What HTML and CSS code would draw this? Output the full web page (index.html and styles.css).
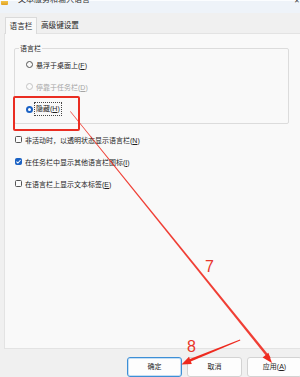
FILE: index.html
```html
<!DOCTYPE html>
<html lang="zh-CN">
<head>
<meta charset="utf-8">
<title>文本服务和输入语言</title>
<link rel="stylesheet" href="styles.css">
</head>
<body>
<div class="window">
  <div class="titlebar">
    <span class="app-icon"></span>
    <span class="title">文本服务和输入语言</span>
    <span class="close">✕</span>
  </div>
  <div class="tabs">
    <div class="tab active">语言栏</div>
    <div class="tab">高级键设置</div>
  </div>
  <div class="panel">
    <div class="group">
      <div class="legend"><span>语言栏</span></div>
      <div class="opt row1"><span class="radio"></span><span>悬浮于桌面上(<u>F</u>)</span></div>
      <div class="opt row2 disabled"><span class="radio"></span><span>停靠于任务栏(<u>D</u>)</span></div>
      <div class="opt row3"><span class="radio on"></span><span class="focus">隐藏(<u>H</u>)</span></div>
    </div>
    <div class="checks">
      <div class="chk"><span class="box"></span><span>非活动时，以透明状态显示语言栏(<u>N</u>)</span></div>
      <div class="chk"><span class="box on"><svg viewBox="0 0 8 8" width="7" height="7"><path d="M1.6 4.1 L3.3 5.7 L6.4 2.3" fill="none" stroke="#fff" stroke-width="1.2"/></svg></span><span>在任务栏中显示其他语言栏图标(<u>I</u>)</span></div>
      <div class="chk"><span class="box"></span><span>在语言栏上显示文本标签(<u>E</u>)</span></div>
    </div>
  </div>
  <div class="footer">
    <div class="btn primary">确定</div>
    <div class="btn">取消</div>
    <div class="btn">应用(<u>A</u>)</div>
  </div>
</div>

<div class="hl-box"></div>
<svg class="arrows" width="300" height="377" viewBox="0 0 300 377">
  <polygon points="70,111.5 70.6,111.2 270.6,357.4 268.6,358.9" fill="#ee2a1f" opacity="0.9"/>
  <polygon points="272,363 262.6,357.6 268.4,352.8" fill="#ee2a1f"/>
  <polygon points="240,339.6 240.3,340.4 189.6,362 188.6,359.4" fill="#ee2a1f"/>
  <polygon points="181.5,364.5 191.8,364 189,356.8" fill="#ee2a1f"/>
</svg>
<span class="num n7">7</span>
<span class="num n8">8</span>
</body>
</html>
```
FILE: styles.css
```css
* { box-sizing: border-box; }
html, body { margin: 0; padding: 0; }
body {
  width: 300px;
  height: 377px;
  overflow: hidden;
  position: relative;
  background: #f0f0f0;
  font-family: "Liberation Sans", "Noto Sans CJK SC", sans-serif;
  font-size: 7px;
  color: #1e1e1e;
}
u { text-decoration: underline; text-underline-offset: 1px; }

.window { width: 300px; height: 377px; display: flex; flex-direction: column; }

.titlebar {
  height: 13px;
  background: #eef3f9;
  border-top: 1px solid #fbfdff;
  display: flex;
  align-items: flex-start;
  position: relative;
}
.app-icon {
  width: 7px; height: 4px;
  margin-left: 1px;
  background: linear-gradient(#f2c44a, #e0a020);
  border-radius: 0 0 1px 1px;
}
.title {
  margin-left: 10px;
  margin-top: -6px;
  font-size: 8px;
  line-height: 10px;
  color: #333;
}
.close {
  position: absolute;
  right: 0; top: -4px;
  font-size: 7px;
  line-height: 8px;
  color: #444;
}

.tabs {
  height: 20px;
  background: #f0f0f0;
  display: flex;
  align-items: flex-end;
  padding-left: 5px;
  gap: 2px;
}
.tab {
  height: 14px;
  line-height: 14px;
  font-size: 7.6px;
  padding: 0 2px;
  margin-bottom: 0;
}
.tab.active {
  height: 17px;
  width: 32px;
  line-height: 17px;
  text-align: center;
  background: #f9f9f9;
  border: 1px solid #dadada;
  border-bottom: none;
  margin-bottom: -1px;
  position: relative;
  z-index: 1;
}

.panel {
  margin-left: 4px;
  height: 320px;
  background: #f9f9f9;
  border: 1px solid #e3e3e3;
  border-right: none;
  padding: 14px 0 0 9px;
}

.group {
  width: 275px;
  height: 76px;
  border: 1px solid #dcdcdc;
  border-radius: 2px;
  padding-left: 11px;
}
.legend { display: flex; height: 5px; align-items: flex-start; }
.legend span {
  margin-top: -5px;
  margin-left: -7px;
  height: 10px;
  line-height: 10px;
  padding: 0 1px;
  background: #f9f9f9;
}
.opt { display: flex; align-items: center; gap: 3px; height: 22px; }
.opt.row3 { height: 23px; }
.opt.disabled { color: #a6a6a6; }
.radio {
  width: 7px; height: 7px;
  border-radius: 50%;
  border: 1px solid #555;
  background: #fbfbfb;
  flex: none;
}
.disabled .radio { border-color: #c4c4c4; }
.radio.on {
  border: 2px solid #1b62c4;
  background: #fff;
}
.focus {
  outline: 1px dotted #444;
  outline-offset: 1px;
  line-height: 10px;
}

.checks { margin-top: 5px; margin-left: 1px; display: flex; flex-direction: column; }
.chk { display: flex; align-items: center; gap: 3px; height: 22px; }
.box {
  width: 7px; height: 7px;
  border: 1px solid #555;
  border-radius: 1.5px;
  background: #fbfbfb;
  flex: none;
  display: flex;
  align-items: center;
  justify-content: center;
}
.box.on { background: #1b62c4; border-color: #1b62c4; }
.box svg { display: block; flex: none; }

.footer {
  flex: 1;
  display: flex;
  gap: 5px;
  padding: 8px 0 0 127px;
}
.btn {
  width: 55px;
  height: 20px;
  flex: none;
  background: #fdfdfd;
  border: 1px solid #d3d3d3;
  border-radius: 3px;
  text-align: center;
  line-height: 17px;
  font-size: 7px;
}
.btn.primary {
  border: 1px solid #3d8fd6;
  box-shadow: inset 0 0 0 1px #c4def4;
}

.hl-box {
  position: absolute;
  left: 13px; top: 96px;
  width: 67px; height: 35px;
  border: 2px solid #ea2d22;
  border-radius: 2px;
}
.arrows { position: absolute; left: 0; top: 0; }
.num {
  position: absolute;
  font-family: "Liberation Sans", sans-serif;
  font-size: 16px;
  line-height: 16px;
  color: #e8352a;
}
.n7 { left: 205px; top: 259px; }
.n8 { left: 187px; top: 339px; }
```
